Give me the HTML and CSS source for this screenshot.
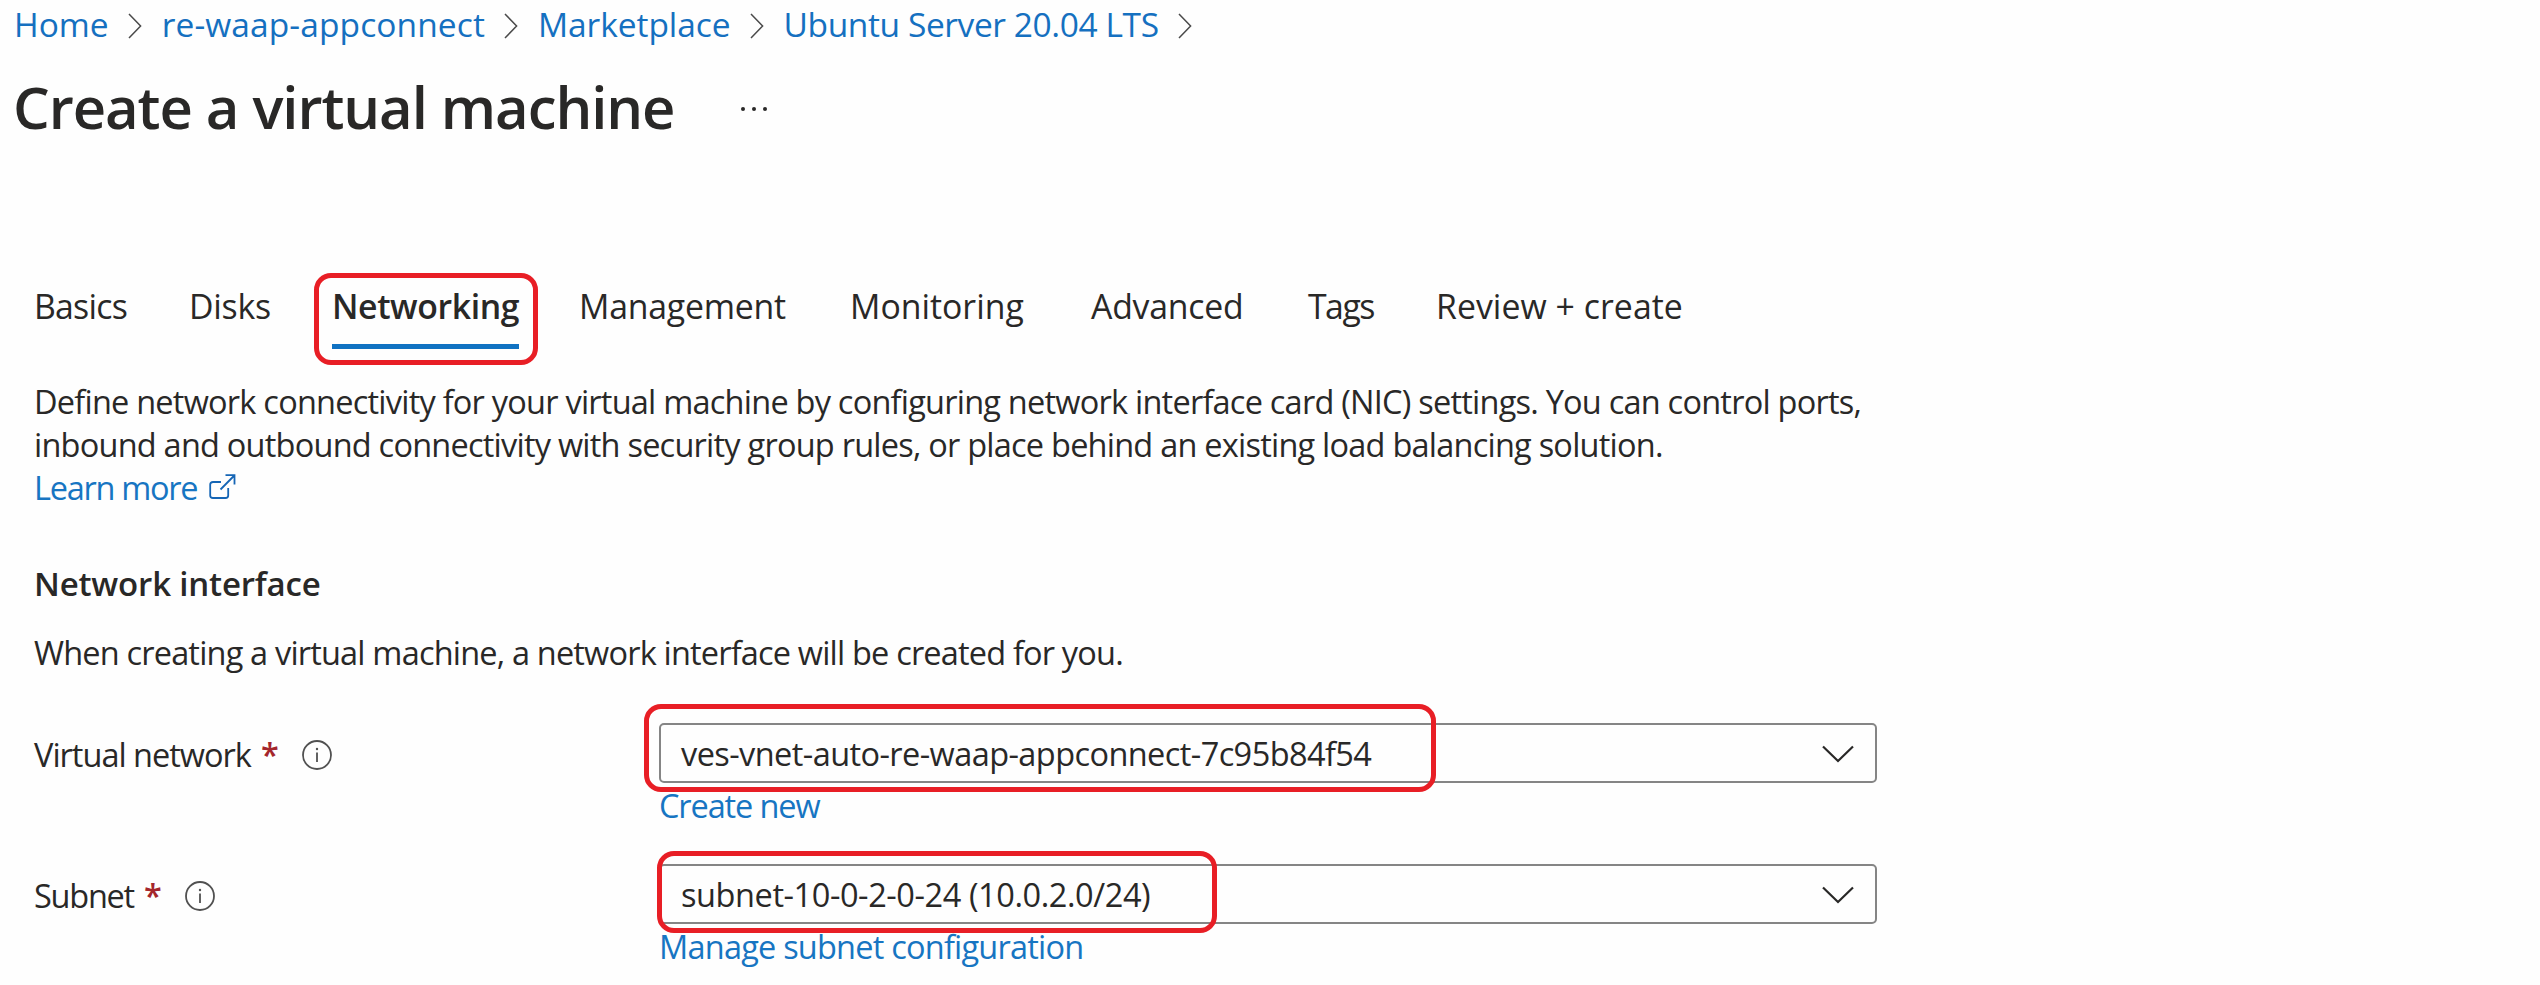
FILE: index.html
```
<!DOCTYPE html>
<html lang="en">
<head>
<meta charset="utf-8">
<title>Create a virtual machine</title>
<link rel="stylesheet" href="styles.css">
</head>
<body>
<svg class="defs" aria-hidden="true">
  <symbol id="sep" viewBox="0 0 14 26"><path d="M1 1 L12.6 13 L1 25" fill="none" stroke="#4a4a4a" stroke-width="1.5"/></symbol>
  <symbol id="info" viewBox="0 0 30 30"><circle cx="15" cy="15" r="14" fill="none" stroke="#505050" stroke-width="1.8"/><path d="M15 12.5V22" stroke="#505050" stroke-width="1.8"/><circle cx="15" cy="9" r="1.2" fill="#505050"/></symbol>
  <symbol id="caret" viewBox="0 0 32 18"><path d="M1 1.5 L16 16 L31 1.5" fill="none" stroke="#292827" stroke-width="2.2"/></symbol>
</svg>
<nav class="breadcrumb">
  <a class="crumb crumb-home">Home</a><svg class="sep"><use href="#sep"/></svg>
  <a class="crumb crumb-app">re-waap-appconnect</a><svg class="sep"><use href="#sep"/></svg>
  <a class="crumb">Marketplace</a><svg class="sep"><use href="#sep"/></svg>
  <a class="crumb crumb-image">Ubuntu Server 20.04 LTS</a><svg class="sep"><use href="#sep"/></svg>
</nav>
<header class="header">
  <h1 class="title">Create a virtual machine</h1>
  <svg class="more" viewBox="0 0 28 6"><circle cx="3" cy="3" r="2"/><circle cx="14" cy="3" r="2"/><circle cx="25" cy="3" r="2"/></svg>
</header>
<main class="content">
  <div class="tabs">
    <a class="tab tab-basics">Basics</a>
    <a class="tab">Disks</a>
    <a class="tab tab-active">Networking<span class="highlight highlight-tab"></span></a>
    <a class="tab">Management</a>
    <a class="tab tab-wide">Monitoring</a>
    <a class="tab">Advanced</a>
    <a class="tab tab-tags">Tags</a>
    <a class="tab tab-review">Review + create</a>
  </div>
  <p class="text intro">Define network connectivity for your virtual machine by configuring network interface card (NIC) settings. You can control ports,<br>inbound and outbound connectivity with security group rules, or place behind an existing load balancing solution.<br><a class="link learn">Learn more</a><svg class="external" viewBox="0 0 27 26"><path d="M12 8H4Q1.2 8 1.2 10.5V21.5Q1.2 24 4 24H16.500Q19.200 24 19.200 21.500V14M11.500 15.500L25.300 1.500M16.500 1.200H25.500V10.500" fill="none" stroke="#1565b5" stroke-width="1.8"/></svg></p>
  <h2 class="subhead">Network interface</h2>
  <p class="text note">When creating a virtual machine, a network interface will be created for you.</p>
  <div class="field">
    <div class="label"><span class="label-vnet">Virtual network</span><span class="required">*</span><svg class="info"><use href="#info"/></svg></div>
    <div class="control">
      <div class="select"><span class="value-vnet">ves-vnet-auto-re-waap-appconnect-7c95b84f54</span><svg class="caret"><use href="#caret"/></svg></div>
      <a class="link create">Create new</a>
      <span class="highlight highlight-vnet"></span>
    </div>
  </div>
  <div class="field field-subnet">
    <div class="label"><span class="label-subnet">Subnet</span><span class="required">*</span><svg class="info"><use href="#info"/></svg></div>
    <div class="control">
      <div class="select"><span class="value-subnet">subnet-10-0-2-0-24 (10.0.2.0/24)</span><svg class="caret"><use href="#caret"/></svg></div>
      <a class="link manage">Manage subnet configuration</a>
      <span class="highlight highlight-subnet"></span>
    </div>
  </div>
</main>
</body>
</html>
```
FILE: styles.css
```
* { box-sizing: border-box; }
body {
  margin: 0;
  height: 985px;
  overflow: hidden;
  background: #fefefe;
  color: #292827;
  font: 32.5px/43px "Open Sans", "Noto Sans", sans-serif;
  white-space: nowrap;
}
.defs { display: none; }
h1, h2, p { margin: 0; }

.breadcrumb {
  display: flex;
  align-items: center;
  gap: 20px;
  height: 49px;
  padding-left: 14px;
  font-size: 33.5px;
  line-height: 49px;
  color: #1570c0;
}
.sep { width: 14px; height: 26px; margin: 2px -0.5px 0; }
.crumb { letter-spacing: -0.05px; }
.crumb-home { letter-spacing: 0; }
.crumb-app { letter-spacing: 0.1px; }
.crumb-image { letter-spacing: -0.41px; }

.header { display: flex; align-items: center; margin-top: 18px; padding-left: 13px; }
.title { font-size: 58px; line-height: 80px; font-weight: 600; letter-spacing: -1.06px; }
.more { width: 28px; height: 6px; margin: 3px 0 0 66px; fill: #292827; }

.content { padding-left: 34px; }
.tabs {
  display: grid;
  grid-template-columns: 155px 143px 247px 271px 241px 217px 128px 260px;
  justify-items: start;
  margin-top: 134px;
  font-size: 33.8px;
  line-height: 51px;
}
.tab { height: 68px; letter-spacing: -0.22px; }
.tab-basics { letter-spacing: -0.76px; }
.tab-wide { letter-spacing: 0; }
.tab-tags { letter-spacing: -1.5px; }
.tab-review { letter-spacing: 0.05px; }
.tab-active {
  position: relative;
  border-bottom: 5px solid #1072c2;
  font-weight: 600;
  letter-spacing: -0.4px;
}

.text { letter-spacing: -0.77px; }
.intro { margin-top: 31px; }
.link { color: #1775c2; }
.learn { letter-spacing: -1.28px; }
.external { width: 27px; height: 26px; margin-left: 12px; vertical-align: 0; }
.subhead {
  margin-top: 53px;
  font-size: 33px;
  line-height: 43px;
  font-weight: 600;
  letter-spacing: -0.18px;
}
.note { margin: 26px 0 49px; letter-spacing: -0.817px; }

.field { display: grid; grid-template-columns: 625px 1218px; align-items: start; }
.field-subnet { margin-top: 37px; }
.label { display: flex; align-items: center; line-height: 63px; }
.label-vnet { letter-spacing: -1px; }
.label-subnet { letter-spacing: -1.25px; }
.required { margin: 0 23px 0 10px; color: #a4262c; font-weight: 600; }
.info { width: 30px; height: 30px; }
.control { position: relative; display: flex; flex-direction: column; align-items: flex-start; gap: 1px; }
.select {
  display: flex;
  align-items: center;
  justify-content: space-between;
  width: 100%;
  height: 60px;
  padding: 0 21px 0 20px;
  border: 2px solid #858585;
  border-radius: 5px;
}
.caret { width: 32px; height: 18px; margin-top: 1px; }
.value-vnet { letter-spacing: -0.58px; }
.value-subnet { letter-spacing: -0.42px; }
.create { letter-spacing: -1.12px; }
.manage { letter-spacing: -0.78px; }

/* Red annotation frames */
.highlight { position: absolute; border: 5px solid #e81e25; border-radius: 17px; }
.highlight-tab { left: -18px; top: -8px; width: 224px; height: 92px; }
.highlight-vnet { left: -15px; top: -19px; width: 792px; height: 88px; }
.highlight-subnet { left: -2px; top: -13px; width: 560px; height: 82px; }
```
